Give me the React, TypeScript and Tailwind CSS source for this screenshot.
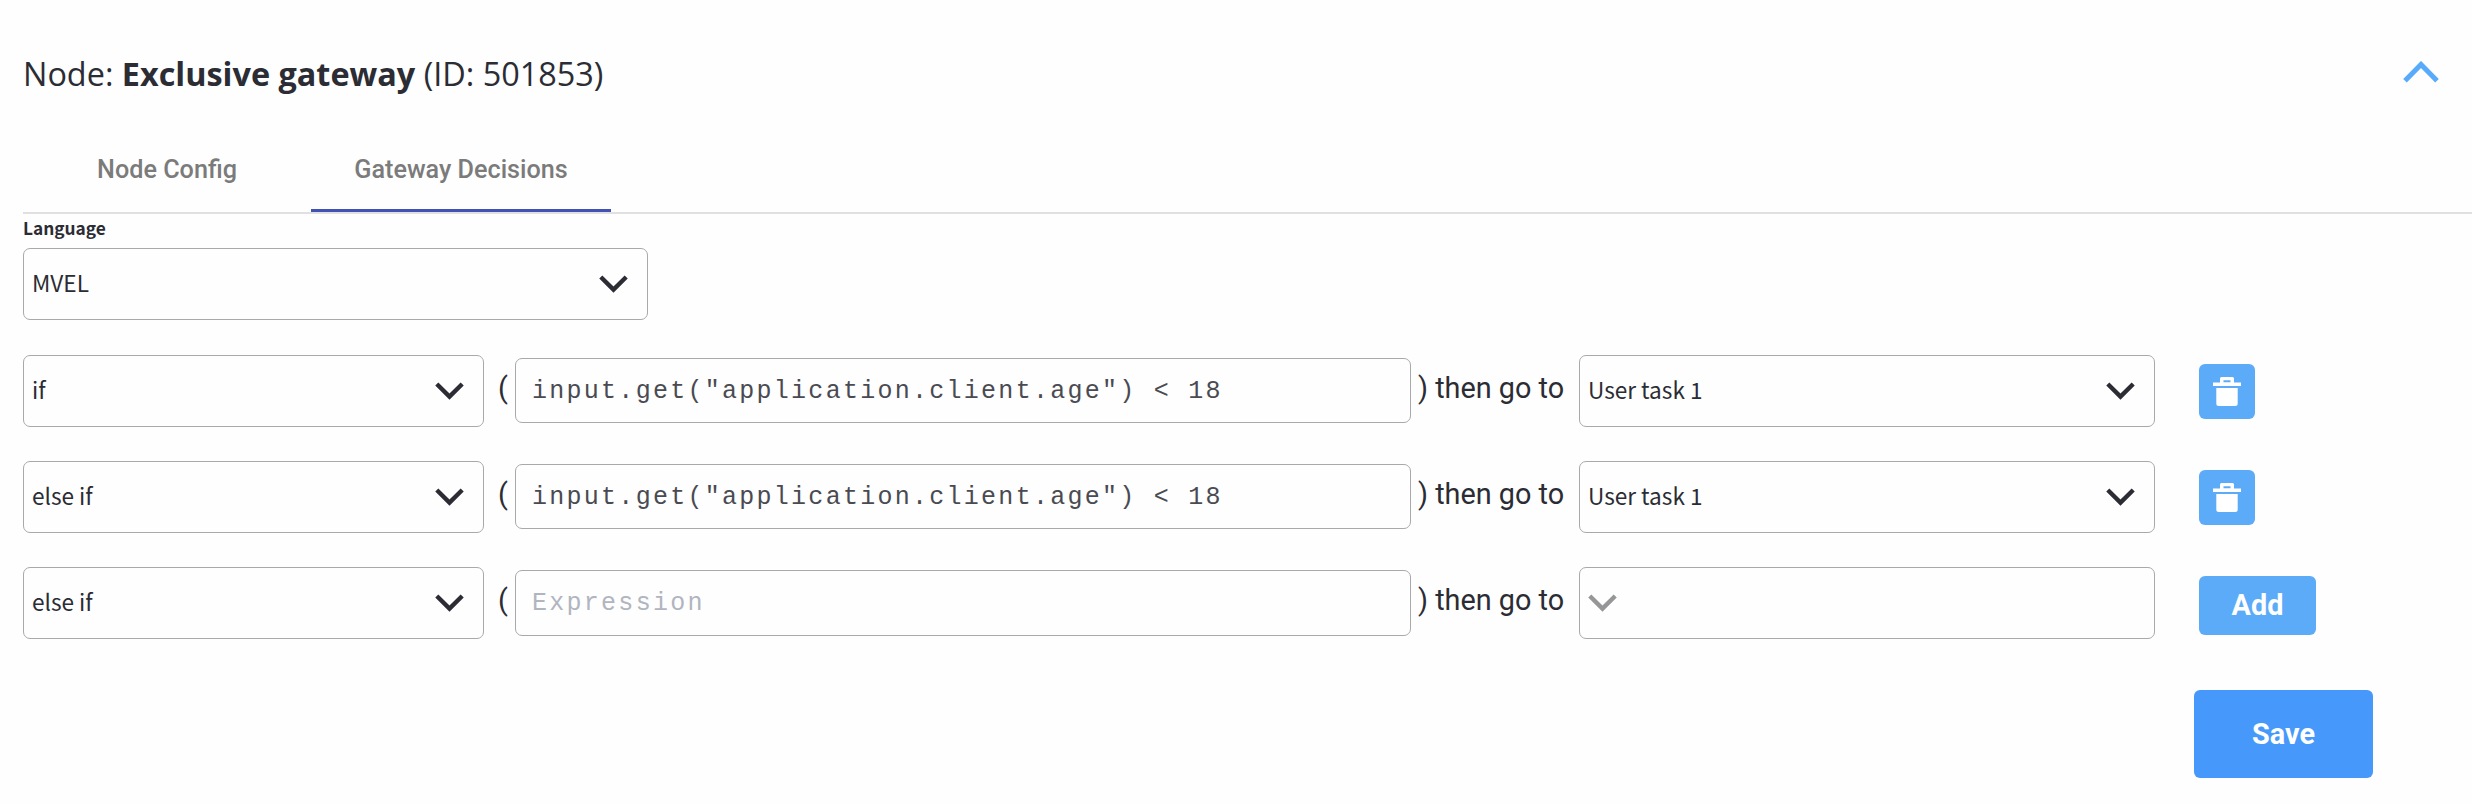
import React from "react";

const sourceSans = "font-['Noto_Sans_CJK_SC','Noto_Sans',sans-serif]";

function Chevron({ className = "" }: { className?: string }) {
  return (
    <svg className={`h-[18px] w-[29px] shrink-0 ${className}`} viewBox="0 0 29 18" fill="none">
      <path d="M1.8 2 14.5 14.6 27.2 2" stroke="currentColor" strokeWidth="4.4" />
    </svg>
  );
}

function Select({ value, className }: { value?: string; className: string }) {
  return (
    <button
      className={`flex h-[72px] items-center justify-between rounded-[7px] border border-[#a9a9ab] pr-[19px] pl-[8px] text-left text-[22.6px] leading-[32px] text-[#2b2c34] ${sourceSans} ${className}`}
    >
      {value ? (
        <>
          <span className="pb-[2px]">{value}</span>
          <Chevron className="mb-px" />
        </>
      ) : (
        <Chevron className="mb-px text-[#959698]" />
      )}
    </button>
  );
}

function TrashIcon() {
  return (
    <svg className="h-[29px] w-[28px]" viewBox="0 0 28 29" fill="white">
      <path
        fillRule="evenodd"
        d="M8.5 0h11A1.5 1.5 0 0 1 21 1.5V5.500h7V9H0V5.500h7V1.500A1.500 1.500 0 0 1 8.500 0ZM10.500 3.300v2h7v-2Z"
      />
      <path d="M3.300 11h21.400v15.500a2.500 2.500 0 0 1-2.500 2.500H5.800a2.500 2.500 0 0 1-2.500-2.500Z" />
    </svg>
  );
}

type Rule = { keyword: string; expression?: string; target?: string };

const rules: Rule[] = [
  { keyword: "if", expression: 'input.get("application.client.age") < 18', target: "User task 1" },
  { keyword: "else if", expression: 'input.get("application.client.age") < 18', target: "User task 1" },
  { keyword: "else if" },
];

function RuleRow({ rule }: { rule: Rule }) {
  return (
    <div className="flex h-[72px] items-start">
      <Select value={rule.keyword} className="w-[461px]" />
      <span className="w-[31px] pt-[16px] pl-[14px] text-[28.8px] leading-[34px]">(</span>
      <div
        className={`mt-[3px] flex w-[896px] items-center rounded-[7px] border border-[#a9a9ab] pt-[2px] pl-[16px] font-['Liberation_Mono',monospace] text-[25px] leading-[30px] tracking-[2.27px] whitespace-pre ${
          rule.expression ? "h-[65px] text-[#4a4b52]" : "h-[66px] text-[#b0b5c0]"
        }`}
      >
        {rule.expression ?? "Expression"}
      </div>
      <span className="w-[168px] pt-[16px] pl-[7px] text-[28.8px] leading-[34px] whitespace-nowrap">) then go to</span>
      <Select value={rule.target} className="w-[576px]" />
      {rule.expression ? (
        <button className="mt-[9px] ml-[44px] flex h-[55px] w-[56px] items-center justify-center rounded-[6px] bg-[#5cabf8]">
          <TrashIcon />
        </button>
      ) : (
        <button className="mt-[9px] ml-[44px] h-[59px] w-[117px] rounded-[6px] bg-[#5cabf8] pb-px text-[28.8px] leading-[34px] font-bold text-white">
          Add
        </button>
      )}
    </div>
  );
}

export default function App() {
  return (
    <main className="flex h-[804px] w-[2472px] flex-col overflow-hidden bg-[#fefefe] pl-[23px] font-['Roboto',sans-serif] text-[#2b2c34]">
      <header className="flex h-[126px] items-start justify-between pt-[51px] pr-[33px]">
        <h1 className="font-['Open_Sans',sans-serif] text-[32.4px] leading-[44px]">
          Node: <b className="font-bold">Exclusive gateway</b> (ID: 501853)
        </h1>
        <svg className="mt-[10px] h-[22px] w-[36px]" viewBox="0 0 36 22" fill="none">
          <path d="M2 19.800 18 3.500 34 19.800" stroke="#58abfa" strokeWidth="5" />
        </svg>
      </header>
      <nav className="flex h-[88px] border-b-2 border-[#e0e0e0] text-[25.2px] leading-[30px] font-medium text-[#7b7b7b]">
        <button className="w-[288px] pt-px">Node Config</button>
        <button className="w-[300px] border-b-[3px] border-[#4252b4] pt-[4px]">Gateway Decisions</button>
      </nav>
      <label className={`h-[34px] pt-px text-[17.3px] leading-[26px] font-semibold ${sourceSans}`}>Language</label>
      <Select value="MVEL" className="w-[625px]" />
      <section className="mt-[35px] flex flex-col gap-[34px]">
        {rules.map((rule, i) => (
          <RuleRow key={i} rule={rule} />
        ))}
      </section>
      <button className="mt-[51px] ml-[2171px] h-[88px] w-[179px] rounded-[6px] bg-[#4699fa] pb-px text-[28.8px] leading-[34px] font-bold text-white">
        Save
      </button>
    </main>
  );
}
